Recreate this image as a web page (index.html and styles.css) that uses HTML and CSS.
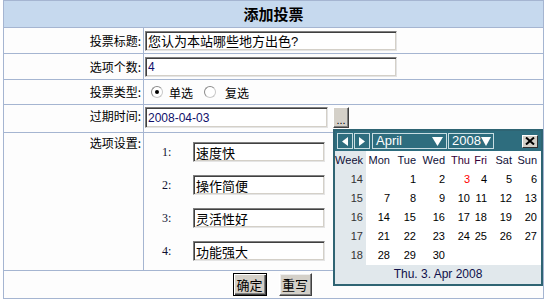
FILE: index.html
```html
<!DOCTYPE html>
<html>
<head>
<meta charset="utf-8">
<link rel="stylesheet" href="styles.css">
</head>
<body>
<div class="form">
  <div class="head">添加投票</div>
  <div class="row r1">
    <div class="label">投票标题:</div>
    <div class="value"><input class="txt wide" value="您认为本站哪些地方出色?"></div>
  </div>
  <div class="row r2">
    <div class="label">选项个数:</div>
    <div class="value"><input class="txt wide latin" value="4"></div>
  </div>
  <div class="row r3">
    <div class="label">投票类型:</div>
    <div class="value radios">
      <span class="radio on"></span><span class="rtext">单选</span>
      <span class="radio second"></span><span class="rtext rtext2">复选</span>
    </div>
  </div>
  <div class="row r4">
    <div class="label">过期时间:</div>
    <div class="value date">
      <input class="txt dt latin" value="2008-04-03"><button class="dots">...</button>
    </div>
  </div>
  <div class="row r5">
    <div class="label">选项设置:</div>
    <div class="value opts">
      <div class="opt"><span class="n">1:</span><input class="txt o" value="速度快"></div>
      <div class="opt"><span class="n">2:</span><input class="txt o" value="操作简便"></div>
      <div class="opt"><span class="n">3:</span><input class="txt o" value="灵活性好"></div>
      <div class="opt"><span class="n">4:</span><input class="txt o" value="功能强大"></div>
    </div>
  </div>
  <div class="row6">
    <button class="btn def">确定</button><button class="btn">重写</button>
  </div>
</div>

<div class="cal">
  <div class="cal-title">
    <span class="tb nav"><svg width="6" height="9" viewBox="0 0 6 9"><polygon points="6,0 6,9 0,4.5" fill="#fff"/></svg></span>
    <span class="tb nav"><svg width="6" height="9" viewBox="0 0 6 9"><polygon points="0,0 0,9 6,4.5" fill="#fff"/></svg></span>
    <span class="tb sel month"><span>April</span><svg width="11" height="9" viewBox="0 0 11 9"><polygon points="0,0 11,0 5.5,9" fill="#fff"/></svg></span>
    <span class="tb sel year"><span>2008</span><svg width="10" height="9" viewBox="0 0 10 9"><polygon points="0,0 10,0 5,9" fill="#fff"/></svg></span>
    <span class="close"><svg width="10" height="8" viewBox="0 0 10 8"><path d="M1 0.5L9 7.5M9 0.5L1 7.5" stroke="#000" stroke-width="2"/></svg></span>
  </div>
  <div class="cal-grid">
    <span class="wk hd">Week</span><span class="hd">Mon</span><span class="hd">Tue</span><span class="hd">Wed</span><span class="hd thu">Thu</span><span class="hd thu">Fri</span><span class="hd">Sat</span><span class="hd">Sun</span>
    <span class="wk">14</span><span></span><span>1</span><span>2</span><span class="red">3</span><span>4</span><span>5</span><span>6</span>
    <span class="wk">15</span><span>7</span><span>8</span><span>9</span><span>10</span><span>11</span><span>12</span><span>13</span>
    <span class="wk">16</span><span>14</span><span>15</span><span>16</span><span>17</span><span>18</span><span>19</span><span>20</span>
    <span class="wk">17</span><span>21</span><span>22</span><span>23</span><span>24</span><span>25</span><span>26</span><span>27</span>
    <span class="wk">18</span><span>28</span><span>29</span><span>30</span><span></span><span></span><span></span><span></span>
  </div>
  <div class="cal-foot">Thu. 3. Apr 2008</div>
</div>
</body>
</html>
```

FILE: styles.css
```css
html, body {
  margin: 0;
  padding: 0;
  background: #ffffff;
}
body {
  position: relative;
  width: 551px;
  height: 308px;
  overflow: hidden;
  font-family: "Noto Sans CJK SC", "Liberation Sans", sans-serif;
  font-size: 12px;
  color: #000;
}
.form {
  margin-left: 3px;
  width: 541px;
  box-sizing: border-box;
  border: 1px solid #a5b5d1;
  background: #fdfdfd;
}
.head {
  height: 26px;
  line-height: 26px;
  text-align: center;
  font-weight: bold;
  font-size: 15px;
  background: #c6d9ee;
  border-bottom: 1px solid #a5b5d1;
}
.row {
  display: grid;
  grid-template-columns: 140px 1fr;
  border-bottom: 1px solid #a5b5d1;
}
.label {
  border-right: 1px solid #a5b5d1;
  padding-right: 2px;
  display: flex;
  align-items: center;
  justify-content: flex-end;
  line-height: 16px;
  white-space: nowrap;
}
.value {
  display: flex;
  align-items: center;
  padding-left: 1px;
}
.r1, .r2 { height: 25px; }
.r3 { height: 24px; }
.r4 { height: 27px; }
.r5 { height: 137px; }
.r4 .label, .r5 .label { align-items: flex-start; }
.r4 .label { padding-top: 3px; }
.r5 .label { padding-top: 2px; }
.r4 .value { align-items: flex-start; padding-top: 2px; }

.txt {
  box-sizing: border-box;
  height: 20px;
  margin: 0;
  padding: 0 1px 0 2px;
  font-family: "Liberation Sans", "Noto Sans CJK SC", sans-serif;
  font-size: 13px;
  color: #000;
  background: #fff;
  border: 1px solid;
  border-color: #7f7f7f #e4e4e4 #e4e4e4 #7f7f7f;
  box-shadow: inset 1px 1px 0 #404040, inset -1px -1px 0 #d4d0c8;
  outline: none;
}
.latin { font-size: 12px; color: #10106a; }
.wide { width: 252px; }
.dt { width: 183px; height: 21px; }

.radios { padding-left: 7px; }
.radio {
  flex: none;
  position: relative;
  width: 12px;
  height: 12px;
  box-sizing: border-box;
  border-radius: 50%;
  border: 1px solid #8a8a8a;
  border-bottom-color: #c8c8c8;
  border-right-color: #c8c8c8;
  background: #fff;
}
.radio.on::after {
  content: "";
  position: absolute;
  left: 3px;
  top: 3px;
  width: 4px;
  height: 4px;
  border-radius: 50%;
  background: #000;
}
.rtext { margin-left: 6px; }
.radio.second { margin-left: 11px; }
.rtext2 { margin-left: 9px; }

.dots {
  box-sizing: border-box;
  width: 16px;
  height: 21px;
  margin: 0 0 0 5px;
  padding: 4px 0 0 0;
  background: #d4d0c8;
  border: 1px solid;
  border-color: #ffffff #404040 #404040 #ffffff;
  box-shadow: inset -1px -1px 0 #808080;
  font-family: "Liberation Sans", sans-serif;
  font-size: 11px;
  color: #000;
}

.opts {
  flex-direction: column;
  align-items: flex-start;
  justify-content: flex-start;
  padding-top: 9px;
  padding-left: 18px;
  gap: 13px;
}
.opt {
  display: flex;
  align-items: center;
  height: 20px;
}
.n {
  width: 31px;
  font-family: "Liberation Serif", serif;
  font-size: 12px;
  color: #101030;
}
.o { width: 132px; }

.row6 {
  height: 27px;
  box-sizing: border-box;
  display: flex;
  justify-content: center;
  align-items: flex-start;
  padding: 2px 3px 0 0;
  gap: 12px;
}
.btn {
  box-sizing: border-box;
  width: 33px;
  height: 23px;
  margin: 0;
  padding: 0;
  background: #d4d0c8;
  border: 1px solid;
  border-color: #ffffff #404040 #404040 #ffffff;
  box-shadow: inset -1px -1px 0 #808080, inset 1px 1px 0 #eeeeee;
  font-family: "Noto Sans CJK SC", sans-serif;
  font-size: 13px;
  line-height: 19px;
  color: #000;
}
.btn.def {
  width: 34px;
  border: 1px solid #000;
  box-shadow: inset 1px 1px 0 #ffffff, inset -1px -1px 0 #404040, inset -2px -2px 0 #808080;
}

/* calendar popup */
.cal {
  position: absolute;
  left: 333px;
  top: 129px;
  width: 206px;
  border: 2px solid #2f6473;
  background: #ffffff;
  font-family: "Liberation Sans", Arial, sans-serif;
}
.cal-title {
  height: 20px;
  background: #2e6d7e;
  display: flex;
  align-items: center;
  padding-left: 2px;
  gap: 1px;
}
.tb {
  box-sizing: border-box;
  height: 16px;
  border: 1px solid #c9dde2;
  color: #ffffff;
  display: flex;
  align-items: center;
}
.nav {
  width: 16px;
  justify-content: center;
}
.nav + .nav { margin-right: 1px; }
.sel {
  justify-content: space-between;
  font-size: 13px;
  line-height: 14px;
  padding: 0 3px 0 3px;
}
.month { width: 75px; padding-right: 3px; }
.year { width: 46px; padding-right: 2px; }
.close {
  box-sizing: border-box;
  margin-left: auto;
  margin-right: 3px;
  width: 16px;
  height: 13px;
  background: #d4d0c8;
  border: 1px solid;
  border-color: #ffffff #303030 #303030 #ffffff;
  display: flex;
  align-items: center;
  justify-content: center;
}
.cal-grid {
  display: grid;
  grid-template-columns: 31px 26px 26px 29px 25px 17px 25px 27px;
  grid-auto-rows: 19px;
  font-size: 11px;
  color: #000;
}
.cal-grid > span {
  text-align: right;
  padding-right: 2px;
  line-height: 19px;
}
.cal-grid > span:nth-child(8n) { padding-right: 4px; }
.cal-grid > .wk {
  background: #e1e8ec;
  color: #333333;
  padding-right: 3px;
}
.cal-grid > .hd { color: #101038; }
.cal-grid > .thu { color: #380038; }
.cal-grid > .red { color: #ff0000; }
.cal-foot {
  height: 19px;
  line-height: 19px;
  background: #e1e8ec;
  text-align: center;
  font-size: 12px;
  color: #10104a;
}
```
